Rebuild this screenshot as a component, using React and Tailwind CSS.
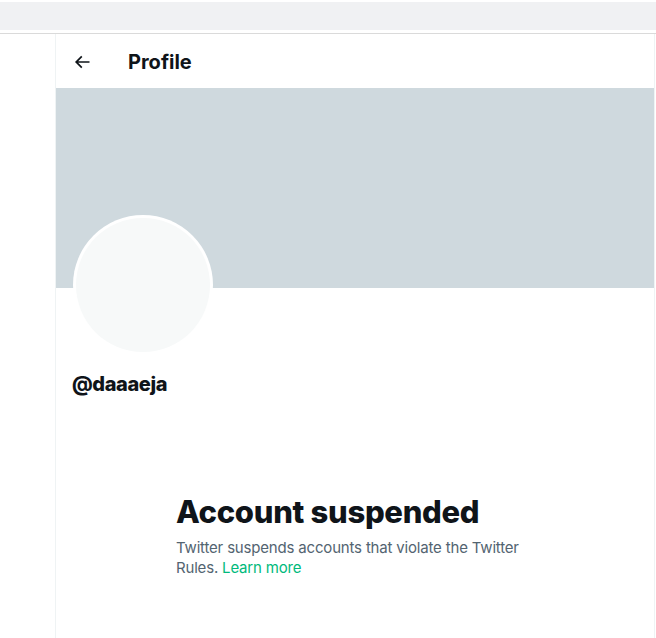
export default function App() {
  return (
    <div className="min-h-[638px] bg-white font-['Inter','Liberation_Sans',sans-serif] text-[#0f1419]">
      {/* browser chrome strip */}
      <div className="h-[2px] bg-white" />
      <div className="h-[28px] bg-[#f0f1f3]" />
      <div className="h-[4px] bg-white border-b border-[#dadada]" />

      <div className="flex">
        <div className="w-[55px] shrink-0" />
        <main className="w-[600px] min-h-[604px] border-x border-[#eff3f4]">
          <div className="h-[54px] flex items-center px-4 pt-px">
            <div className="w-[56px] flex items-center">
              <svg viewBox="0 0 24 24" className="w-5 h-5 fill-[#0f1419]">
                <path d="M7.414 13l5.043 5.04-1.414 1.42L3.586 12l7.457-7.46 1.414 1.42L7.414 11H21v2H7.414z" />
              </svg>
            </div>
            <h2 className="text-[20px] leading-6 font-bold">Profile</h2>
          </div>

          <div className="h-[200px] bg-[#cfd9de]" />

          <div className="px-4">
            <div className="-mt-[73px] w-[140px] h-[140px] rounded-full bg-white p-[3px] ml-px">
              <div className="w-full h-full rounded-full bg-[#f7f9f9]" />
            </div>
            <div className="mt-[17px] text-[20px] leading-6 font-extrabold tracking-[-0.4px]">@daaaeja</div>
          </div>

          <div className="mt-[98px] mx-auto max-w-[400px] px-[21px]">
            <h1 className="text-[31px] leading-9 font-extrabold tracking-[-0.3px] mb-2">Account suspended</h1>
            <p className="text-[15px] leading-5 text-[#536471] tracking-[-0.18px]">
              Twitter suspends accounts that violate the Twitter Rules.{" "}
              <a href="#" className="text-[#00ba7c]">Learn more</a>
            </p>
          </div>
        </main>
      </div>
    </div>
  );
}
